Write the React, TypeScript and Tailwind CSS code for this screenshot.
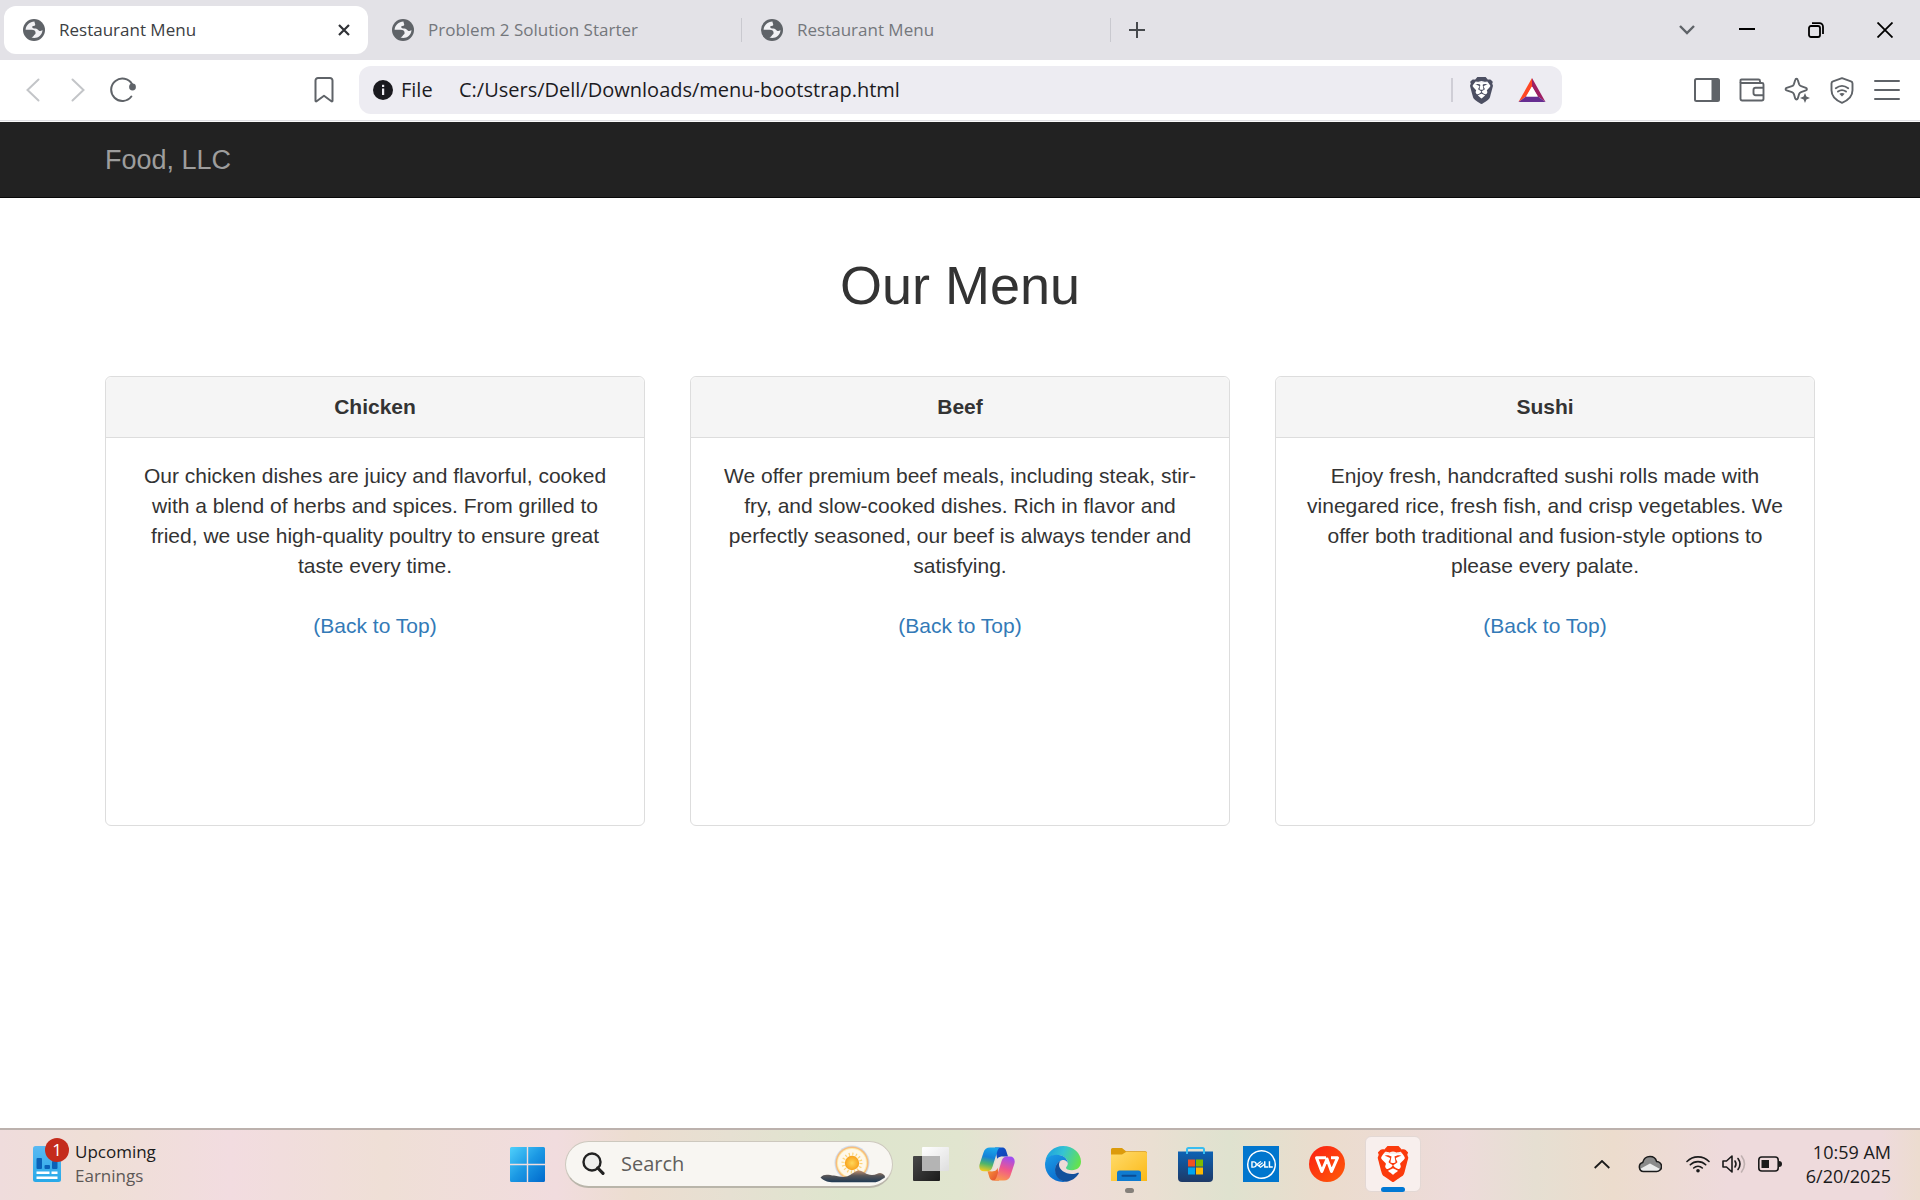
import type { ReactNode } from "react";
import { SiBrave, SiDell } from "react-icons/si";

const uiFont = "font-['Segoe_UI','Open_Sans',sans-serif]";

function Globe() {
  return (
    <svg width="22" height="22" viewBox="0 0 22 22" className="shrink-0">
      <circle cx="11" cy="11" r="11" fill="#5f6368" />
      <path
        d="M11.5 2.6C6.6 2.8 3 6.400 2.600 10.800H8.600c2.600 0 4 1.200 4 3.200 0 1.500-1.400 1.600-1.900 2.700-.4.900-1.400 1.300-2.300 1.900C14 20.300 19.500 16.500 19.400 11c-1.300 1.200-2.500 1.300-3.700.5-1-.8-1.600-2-3.300-2-1.700 0-3.200-.2-3.200-1.500 0-1.700 2.600-.6 3-2 .3-1-.7-1.400-.7-3.400Z"
        fill="#f1f1f4"
      />
    </svg>
  );
}

function Tab({ title, active = false }: { title: string; active?: boolean }) {
  return (
    <div
      className={
        active
          ? "flex h-12 w-[364px] items-center rounded-xl bg-white pr-3 pl-[19px]"
          : "flex h-12 w-[369px] items-center pl-[19px]"
      }
    >
      <Globe />
      <a href="#top" className="flex-1 truncate pl-[14px] text-[17px]">
        <span className={active ? "text-[#3c4043]" : "text-[#74777c]"}>{title}</span>
      </a>
      {active ? (
        <button aria-label="Close tab" className="grid size-6 place-items-center">
          <svg width="12" height="12" viewBox="0 0 12 12" stroke="#303236" strokeWidth="2.200">
            <path d="M1 1l10 10M11 1L1 11" />
          </svg>
        </button>
      ) : (
        <span className="h-6 w-px bg-[#c9c9cf]" />
      )}
    </div>
  );
}

function IconButton({ label, className, children }: { label: string; className: string; children: ReactNode }) {
  return (
    <button aria-label={label} className={`grid shrink-0 place-items-center ${className}`}>
      {children}
    </button>
  );
}

function TabStrip() {
  return (
    <header className="flex h-[60px] items-center bg-[#e3e2e7] pl-1">
      <Tab title="Restaurant Menu" active />
      <div className="w-[5px]" />
      <Tab title="Problem 2 Solution Starter" />
      <Tab title="Restaurant Menu" />
      <IconButton label="New tab" className="ml-[6px] size-10">
        <svg width="16" height="16" viewBox="0 0 16 16" stroke="#46494d" strokeWidth="2">
          <path d="M8 0v16M0 8h16" />
        </svg>
      </IconButton>
      <div className="flex-1" />
      <IconButton label="Search tabs" className="h-12 w-[50px]">
        <svg width="16" height="10" viewBox="0 0 16 10" fill="none" stroke="#5f6368" strokeWidth="2.400">
          <path d="M1 1l7 7 7-7" />
        </svg>
      </IconButton>
      <IconButton label="Minimize" className="h-12 w-[69px]">
        <svg width="16" height="16" viewBox="0 0 16 16" stroke="#000" strokeWidth="2">
          <path d="M0 7h16" />
        </svg>
      </IconButton>
      <IconButton label="Restore" className="h-12 w-[69px]">
        <svg width="16" height="16" viewBox="0 0 16 16" fill="none" stroke="#000" strokeWidth="1.800">
          <rect x="1" y="4" width="11" height="11" rx="2" />
          <path d="M4 1.200h7.500a3.500 3.500 0 0 1 3.500 3.500V12" />
        </svg>
      </IconButton>
      <IconButton label="Close window" className="mr-px h-12 w-[69px]">
        <svg width="16" height="16" viewBox="0 0 16 16" stroke="#000" strokeWidth="1.800">
          <path d="M.5.5l15 15M15.500.5l-15 15" />
        </svg>
      </IconButton>
    </header>
  );
}

function Toolbar() {
  return (
    <div className="flex h-[62px] items-start border-b border-[#fafafa] bg-white">
      <div className="flex h-[61px] w-full items-center border-b border-[#dfdfe3] pr-[11px] pl-[11px]">
        <IconButton label="Back" className="size-11">
          <svg width="14" height="24" viewBox="0 0 14 24" fill="none" stroke="#c3c5c8" strokeWidth="2" strokeLinecap="round">
            <path d="M12.500 1.500L1.500 12l11 10.500" />
          </svg>
        </IconButton>
        <IconButton label="Forward" className="ml-px size-11">
          <svg width="14" height="24" viewBox="0 0 14 24" fill="none" stroke="#c3c5c8" strokeWidth="2" strokeLinecap="round">
            <path d="M1.500 1.500L12.500 12l-11 10.500" />
          </svg>
        </IconButton>
        <IconButton label="Reload" className="ml-px size-11">
          <svg width="26" height="26" viewBox="0 0 26 26" fill="none">
            <path d="M21.300 19.500A11.200 11.200 0 1 1 22 7" stroke="#5f6368" strokeWidth="2" strokeLinecap="round" />
            <circle cx="22.500" cy="10" r="3.400" fill="#5f6368" />
          </svg>
        </IconButton>
        <IconButton label="Bookmark this page" className="ml-[157px] size-11">
          <svg width="20" height="26" viewBox="0 0 20 26" fill="none" stroke="#5f6368" strokeWidth="2" strokeLinejoin="round">
            <path d="M1.500 3.500a2.500 2.500 0 0 1 2.500-2.500h12a2.500 2.500 0 0 1 2.500 2.500v20.200c0 .7-.6.900-1.100.5L10 18.800l-7.400 5.400c-.5.400-1.100.2-1.100-.5Z" />
          </svg>
        </IconButton>
        <div className="ml-[13px] flex h-12 flex-1 items-center rounded-xl bg-[#edecf2] pr-4 pl-[14px]">
          <svg width="20" height="20" viewBox="0 0 20 20" className="shrink-0">
            <circle cx="10" cy="10" r="10" fill="#1a1a1f" />
            <rect x="9" y="8.500" width="2.200" height="6.500" fill="#edecf2" />
            <rect x="9" y="4.800" width="2.200" height="2.200" fill="#edecf2" />
          </svg>
          <label htmlFor="address" className="w-[66px] pl-2 text-[20px] text-[#1c1b1f]">
            File
          </label>
          <input
            id="address"
            className="min-w-0 flex-1 bg-transparent text-[20px] text-[#1c1b1f] outline-none"
            defaultValue="C:/Users/Dell/Downloads/menu-bootstrap.html"
          />
          <span className="mr-[14px] h-6 w-[2px] bg-[#cfced6]" />
          <IconButton label="Shields" className="h-10 w-7">
            <svg width="27" height="27" viewBox="0 0 28 28" className="col-start-1 row-start-1">
              <path d="M6 6h16l2 4-3 10-7 5-7-5L4 10Z" fill="#fff" />
            </svg>
            <SiBrave size={27} color="#4c4f62" className="col-start-1 row-start-1" />
          </IconButton>
          <IconButton label="Rewards" className="ml-[23px] h-10 w-7">
            <svg width="28" height="24" viewBox="0 0 28 24">
              <path d="M14 0v8.500L8 18.500.5 24Z" fill="#ff4724" />
              <path d="M14 0v8.500l6 10 7.500 5.500Z" fill="#9e1f63" />
              <path d="M.5 24L8 18.500h12l7.500 5.500Z" fill="#662d91" />
              <path d="M14 8.500l-5.700 10h11.400Z" fill="#fff" />
            </svg>
          </IconButton>
        </div>
        <div className="ml-[123px] flex items-center gap-[1px]">
          <IconButton label="Sidebar" className="size-11">
            <svg width="26" height="24" viewBox="0 0 26 24">
              <rect x="1" y="1" width="24" height="22" rx="1.500" fill="none" stroke="#5f6368" strokeWidth="2" />
              <path d="M17.500 1H25v22h-7.500Z" fill="#5f6368" />
            </svg>
          </IconButton>
          <IconButton label="Wallet" className="size-11">
            <svg width="26" height="24" viewBox="0 0 26 24" fill="none" stroke="#5f6368" strokeWidth="1.900" strokeLinejoin="round">
              <path d="M1.500 5V2.500Q1.500 1.500 2.500 1.500h17Q21 1.500 21 3v2" />
              <path d="M1.500 5H23q1.500 0 1.500 1.500v14.300q0 1.700-1.700 1.700H3.200q-1.700 0-1.700-1.700Z" />
              <path d="M24.500 9.800h-7.800q-2.200 0-2.200 2.200v3q0 2.200 2.200 2.200h7.800" />
            </svg>
          </IconButton>
          <IconButton label="Assistant" className="size-11">
            <svg width="26" height="26" viewBox="0 0 26 26">
              <path
                d="M12.500 1.800q1 0 1.300 1.100l1.300 4.300q.5 1.500 2 2l4.800 1.700q1 .4 1 1.300t-1 1.200l-4.800 1.700q-1.500.5-2 2l-1.300 4.300q-.4 1.100-1.300 1.100t-1.300-1.100l-1.300-4.300q-.5-1.500-2-2L2.600 13.400q-1-.3-1-1.200t1-1.300l5.300-1.700q1.500-.5 2-2l1.300-4.300q.3-1.100 1.300-1.100Z"
                fill="none"
                stroke="#5f6368"
                strokeWidth="1.900"
              />
              <path d="M21 16l1.400 3.600L26 21l-3.600 1.400L21 26l-1.400-3.600L16 21l3.600-1.400Z" fill="#5f6368" stroke="#fff" strokeWidth="1" paintOrder="stroke" />
            </svg>
          </IconButton>
          <IconButton label="VPN" className="size-11">
            <svg width="24" height="27" viewBox="0 0 24 27" fill="none" stroke="#5f6368" strokeWidth="1.900" strokeLinejoin="round">
              <path d="M12 1.200l9 3.200q1.500.5 1.500 2v6.900c0 5.500-3.700 9.800-10.500 12.500C5.200 23.100 1.500 18.800 1.500 13.300V6.400q0-1.500 1.500-2Z" />
              <path d="M5.800 11.200q6.200-4.600 12.400 0M8 14.600q4-3 8 0" strokeLinecap="round" />
              <path d="M9.300 16.800q2.700-1.600 5.400 0L12 19.500Z" fill="#5f6368" stroke="none" />
            </svg>
          </IconButton>
          <IconButton label="Menu" className="size-11">
            <svg width="26" height="22" viewBox="0 0 26 22" stroke="#5f6368" strokeWidth="2" strokeLinecap="round">
              <path d="M1 2h24M1 11h24M1 20h24" />
            </svg>
          </IconButton>
        </div>
      </div>
    </div>
  );
}

const dishes = [
  {
    name: "Chicken",
    text: "Our chicken dishes are juicy and flavorful, cooked with a blend of herbs and spices. From grilled to fried, we use high-quality poultry to ensure great taste every time.",
  },
  {
    name: "Beef",
    text: "We offer premium beef meals, including steak, stir-fry, and slow-cooked dishes. Rich in flavor and perfectly seasoned, our beef is always tender and satisfying.",
  },
  {
    name: "Sushi",
    text: "Enjoy fresh, handcrafted sushi rolls made with vinegared rice, fresh fish, and crisp vegetables. We offer both traditional and fusion-style options to please every palate.",
  },
];

function MenuPage() {
  return (
    <div id="top" className="flex-1 bg-white font-['Liberation_Sans',Arial,sans-serif] text-[21px] leading-[30px] text-[#333]">
      <nav className="border-b border-[#080808] bg-[#222]">
        <div className="mx-auto flex h-[75px] w-full max-w-[1710px] items-center">
          <a href="#top" className="text-[27px] text-[#9d9d9d]">
            Food, LLC
          </a>
        </div>
      </nav>
      <main className="mx-auto w-full max-w-[1710px]">
        <h1 className="mt-[57px] text-center text-[54px] leading-[60px]">Our Menu</h1>
        <div className="mt-[61px] grid grid-cols-3 gap-[45px]">
          {dishes.map((dish) => (
            <section key={dish.name} className="min-h-[450px] rounded-md border border-[#ddd] text-center">
              <h2 className="rounded-t-md border-b border-[#ddd] bg-[#f5f5f5] py-[15px] font-bold">{dish.name}</h2>
              <div className="px-6 py-[23px]">
                <p>{dish.text}</p>
                <a href="#top" className="mt-[30px] inline-block text-[#337ab7]">
                  (Back to Top)
                </a>
              </div>
            </section>
          ))}
        </div>
      </main>
    </div>
  );
}

function TaskbarApp({ label, state, children }: { label: string; state?: "open" | "active"; children: ReactNode }) {
  return (
    <button
      aria-label={label}
      className={
        state === "active"
          ? "relative grid size-14 place-items-center rounded-md border border-[#e3d8d4] bg-[#f8efed]"
          : "relative grid size-14 place-items-center"
      }
    >
      {children}
      {state === "open" && <span className="absolute -bottom-px h-[5px] w-[9px] rounded-full bg-[#85807a]" />}
      {state === "active" && <span className="absolute -bottom-px h-[5px] w-6 rounded-full bg-[#0078d4]" />}
    </button>
  );
}

function WindowsLogo() {
  return (
    <svg width="35" height="35" viewBox="0 0 35 35">
      <defs>
        <linearGradient id="win" x1="0" y1="0" x2="1" y2="1">
          <stop offset="0" stopColor="#4fd0fb" />
          <stop offset=".5" stopColor="#1b98e4" />
          <stop offset="1" stopColor="#0069cc" />
        </linearGradient>
      </defs>
      <path d="M1.500 0H16.800V16.800H0V1.500A1.500 1.500 0 0 1 1.500 0ZM18.200 0H33.500A1.500 1.500 0 0 1 35 1.500V16.800H18.200ZM0 18.200H16.800V35H1.500A1.500 1.500 0 0 1 0 33.500ZM18.200 18.200H35V33.500A1.500 1.500 0 0 1 33.500 35H18.200Z" fill="url(#win)" />
    </svg>
  );
}

function SunriseArt() {
  return (
    <svg width="66" height="40" viewBox="0 0 66 40" className="shrink-0">
      <defs>
        <radialGradient id="sun">
          <stop offset="0" stopColor="#ffd75a" />
          <stop offset="1" stopColor="#f8a21c" />
        </radialGradient>
        <linearGradient id="hill" x1="0" y1="0" x2="0" y2="1">
          <stop offset="0" stopColor="#c08e6c" />
          <stop offset=".45" stopColor="#565558" />
          <stop offset="1" stopColor="#1f3a55" />
        </linearGradient>
      </defs>
      <circle cx="32" cy="19" r="17.500" fill="#cfdcec" />
      <circle cx="32" cy="19" r="16.500" fill="#f8bd7c" />
      <circle cx="32" cy="19" r="15" fill="#fdeeb0" />
      <circle cx="32" cy="19" r="14" fill="#fff8ea" />
      <circle cx="32" cy="19" r="9" fill="none" stroke="#fcd579" strokeWidth="3" strokeDasharray="1.200 2.334" />
      <circle cx="32" cy="19" r="7.200" fill="url(#sun)" />
      <path d="M.5 33.500C4 29 9 31 14 31.500c6 .8 10 2.700 15 0 4-2.200 7-5 10-5 4 .2 7 4.500 13 4.500 5 0 7-3.500 10-1.500 3 1.500 3.500 3 2.500 4.500C61 35.500 59 38.300 54 38.300H14C8 38.300 4 37 .5 33.500Z" fill="url(#hill)" />
    </svg>
  );
}

function Copilot() {
  return (
    <svg width="36" height="34" viewBox="0 0 36 34">
      <defs>
        <linearGradient id="cpA" x1=".5" y1="0" x2=".3" y2="1">
          <stop offset="0" stopColor="#1ba6ea" />
          <stop offset=".4" stopColor="#1481d8" />
          <stop offset=".7" stopColor="#4fb56b" />
          <stop offset="1" stopColor="#f0cb1e" />
        </linearGradient>
        <linearGradient id="cpB" x1=".6" y1="0" x2=".3" y2="1">
          <stop offset="0" stopColor="#a04df0" />
          <stop offset=".5" stopColor="#f0578c" />
          <stop offset="1" stopColor="#fb9a4b" />
        </linearGradient>
        <linearGradient id="cpC" x1="0" y1="0" x2="1" y2="1">
          <stop offset="0" stopColor="#0b57d0" />
          <stop offset="1" stopColor="#173fae" />
        </linearGradient>
        <linearGradient id="cpD" x1="0" y1="0" x2="1" y2="1">
          <stop offset="0" stopColor="#f9a03c" />
          <stop offset="1" stopColor="#e2452e" />
        </linearGradient>
      </defs>
      <path d="M16 .5h7c3 0 3.800 1.800 4.500 4.200L29 9.500h-5c-3 0-4.600 1.500-5.500 4Z" fill="url(#cpC)" />
      <path d="M20 33.500h-5c-3.500 0-4.300-2-5-4.500L8.500 24.300H14c2.500 0 3.800-1.600 4.600-4Z" fill="url(#cpD)" />
      <path d="M11 .5H22c-2 0-3 1.600-3.600 3.500l-5 16c-1 3-2.400 4.300-5.400 4.300H5c-4 0-5.500-3.300-4.300-7.300L4.500 5.500C5.500 2.300 7.700.5 11 .5Z" fill="url(#cpA)" />
      <path d="M25 33.500H14c2 0 3-1.600 3.600-3.500l5-16c1-3 2.400-4.500 5.400-4.500h3c4 0 5.500 3.500 4.300 7.500l-3.800 11.500c-1 3.200-3.200 5-6.500 5Z" fill="url(#cpB)" />
      <path d="M24 9.500c-4 0-6 1.300-7 4.500l-2 6.300c-.7 2.200-1.700 3.500-3.500 4 4.500 0 6.700-1.300 7.700-4.500l2-6.300c.7-2.200 1.300-3.500 2.800-4Z" fill="#f0e0dc" />
    </svg>
  );
}

function Edge() {
  return (
    <svg width="36" height="36" viewBox="0 0 36 36">
      <defs>
        <linearGradient id="edA" x1="0" y1=".3" x2="1" y2=".6">
          <stop offset="0" stopColor="#1c9fe0" />
          <stop offset=".45" stopColor="#35c3d3" />
          <stop offset="1" stopColor="#66e34a" />
        </linearGradient>
        <linearGradient id="edB" x1="0" y1="0" x2=".5" y2="1">
          <stop offset="0" stopColor="#1d9de6" />
          <stop offset="1" stopColor="#0a6cce" />
        </linearGradient>
      </defs>
      <path d="M.3 15.500C1.500 6.500 9 0 18 0c10.500 0 18 7.500 18 15.500 0 5.500-4 8.700-9 8.700-4 0-6-1.300-6-2.500 0-.9 1.800-1.700 1.800-4.500 0-4.500-4-8.200-10.300-8.200C6 9 1.500 12.500.3 15.500Z" fill="url(#edA)" />
      <path d="M0 18.500C0 12 5 8.700 11.500 8.700c7 0 11 4 11.300 8.300-1.200-2.500-3.200-3.500-5.300-3-4 .8-7.500 5-7 10.500.4 5.500 4.800 10.500 10.500 11.200C9 37.500 0 28.500 0 18.500Z" fill="url(#edB)" />
      <path d="M16 14.500c-3.500 1.500-6.300 5.500-5.900 10.500.5 6 5.400 10.300 10.900 10.700 5.500-.6 9.800-3.700 12.700-8 .5-.8-.2-1.300-1-.9-1.500.8-3.500 1.300-5.700 1.300-7 0-13-4.600-13-9.300 0-1.800.8-3.300 2-4.300Z" fill="#114f9c" />
    </svg>
  );
}

function Taskbar() {
  return (
    <footer
      className={`grid h-[72px] grid-cols-[1fr_auto_1fr] items-center border-t-2 border-[#bcb1ad] bg-[linear-gradient(90deg,#efdcdc_0%,#efdfd6_5%,#f2dce0_12%,#efdfd6_20%,#f1dcde_29%,#ecddd0_33%,#e6e0d2_38%,#dee5cd_44%,#e1e5cf_50%,#efdbd9_55%,#eadfd2_60%,#dfe2cf_64%,#ebdccd_69%,#eddbda_76%,#e6dfd2_80%,#ecdccd_84%,#eedadc_90%,#eedadc_98%,#ecdccf_100%)] pb-[2px] ${uiFont}`}
    >
      <button className="flex items-center pl-[33px] text-left">
        <span className="relative mr-[14px] block">
          <svg width="28" height="36" viewBox="0 0 28 36">
            <defs>
              <linearGradient id="news" x1="0" y1="0" x2="0" y2="1">
                <stop offset="0" stopColor="#5ab9f2" />
                <stop offset="1" stopColor="#27a9e8" />
              </linearGradient>
            </defs>
            <rect width="28" height="36" rx="2.500" fill="url(#news)" />
            <rect x="3.500" y="12" width="5.500" height="11" rx="1" fill="#0b62b8" />
            <rect x="11.500" y="19" width="5.500" height="4" rx="1" fill="#0b62b8" />
            <rect x="19" y="15" width="5.500" height="8" rx="1" fill="#0b62b8" />
            <path d="M3.500 26.800H16.500M18.500 26.800H24.500M3.500 31.800H24.500" stroke="#fff" strokeWidth="2.400" />
          </svg>
          <span className="absolute -top-2 left-3 grid size-6 place-items-center rounded-full bg-[#c42b1c] text-[17px] leading-6 text-white">1</span>
        </span>
        <span className="text-[17px] leading-6">
          <span className="block text-[#1b1b1b]">Upcoming</span>
          <span className="block text-[#5d5856]">Earnings</span>
        </span>
      </button>

      <div className="flex items-center gap-[10px]">
        <TaskbarApp label="Start">
          <WindowsLogo />
        </TaskbarApp>
        <label className="flex h-[47px] w-[328px] items-center rounded-full border border-b-2 border-[#cdc8be] border-b-[#b9b5aa] bg-[#f8f6f2] pr-[6px] pl-4">
          <svg width="23" height="23" viewBox="0 0 23 23" fill="none" stroke="#222" strokeWidth="2.400" className="shrink-0">
            <circle cx="10" cy="10" r="8.500" fill="#eeeeec" />
            <path d="M15.800 16L21 21.300" strokeWidth="3.200" strokeLinecap="round" />
          </svg>
          <input aria-label="Search" placeholder="Search" className="ml-4 min-w-0 flex-1 bg-transparent text-[20px] outline-none placeholder:text-[#605e5c]" />
          <SunriseArt />
        </label>
        <TaskbarApp label="Task view">
          <svg width="36" height="34" viewBox="0 0 36 34">
            <defs>
              <linearGradient id="tvDark" x1="0" y1="0" x2="1" y2="1">
                <stop offset="0" stopColor="#484848" />
                <stop offset="1" stopColor="#1b1b1b" />
              </linearGradient>
              <linearGradient id="tvLight" x1="0" y1="0" x2="1" y2="1">
                <stop offset="0" stopColor="#fff" />
                <stop offset="1" stopColor="#dedede" />
              </linearGradient>
            </defs>
            <rect y="9" width="27" height="25" rx="1" fill="url(#tvDark)" />
            <rect x="9" width="27" height="24" rx="1" fill="url(#tvLight)" />
            <path d="M9 9h18v15H9Z" fill="#b4b4b4" />
          </svg>
        </TaskbarApp>
        <TaskbarApp label="Copilot">
          <Copilot />
        </TaskbarApp>
        <TaskbarApp label="Edge">
          <Edge />
        </TaskbarApp>
        <TaskbarApp label="File Explorer" state="open">
          <svg width="36" height="33" viewBox="0 0 36 33">
            <defs>
              <linearGradient id="folder" x1="0" y1="0" x2="1" y2="1">
                <stop offset="0" stopColor="#ffdb6b" />
                <stop offset="1" stopColor="#fbb917" />
              </linearGradient>
            </defs>
            <path d="M0 1.500Q0 0 1.500 0H11l4 3.300H34.500Q36 3.300 36 5v6H0Z" fill="#dc9b0b" />
            <path d="M0 6.500H11L15 4H34.500Q36 4 36 5.500V33H0Z" fill="url(#folder)" />
            <path d="M6 33V25q0-2.500 2.500-2.500h19Q30 22.500 30 25v8Z" fill="#0f7bd0" />
            <rect x="10.500" y="26.800" width="15" height="2" rx="1" fill="#0b4c93" />
          </svg>
        </TaskbarApp>
        <TaskbarApp label="Microsoft Store">
          <svg width="35" height="35" viewBox="0 0 35 35">
            <defs>
              <linearGradient id="store" x1="0" y1="0" x2="0" y2="1">
                <stop offset="0" stopColor="#0c62b4" />
                <stop offset="1" stopColor="#1e3a67" />
              </linearGradient>
            </defs>
            <path d="M0 4.500H35V31q0 4-4 4H4q-4 0-4-4Z" fill="url(#store)" />
            <path d="M9 7V2.500Q9 1 10.500 1h14Q26 1 26 2.500V7" fill="none" stroke="#38bdf0" strokeWidth="2" />
            <path d="M10 12.500h7v7h-7Z" fill="#f25022" />
            <path d="M18 12.500h7v7h-7Z" fill="#7fba00" />
            <path d="M10 20.500h7v7h-7Z" fill="#00a4ef" />
            <path d="M18 20.500h7v7h-7Z" fill="#ffb900" />
          </svg>
        </TaskbarApp>
        <TaskbarApp label="Dell">
          <span className="grid size-9 place-items-center bg-[#0076ce]">
            <SiDell size={29} color="#fff" />
          </span>
        </TaskbarApp>
        <TaskbarApp label="WPS Office">
          <svg width="36" height="36" viewBox="0 0 36 36">
            <defs>
              <linearGradient id="wps" x1="0" y1="0" x2="1" y2="1">
                <stop offset="0" stopColor="#fb1f14" />
                <stop offset="1" stopColor="#ff5c08" />
              </linearGradient>
            </defs>
            <circle cx="18" cy="18" r="18" fill="url(#wps)" />
            <path d="M17 11.800H7.500l5.300 13.700L18 13l4.500 12.500L28.500 11.800H22" fill="none" stroke="#fff" strokeWidth="3" strokeLinejoin="round" />
          </svg>
        </TaskbarApp>
        <TaskbarApp label="Brave" state="active">
          <svg width="36" height="36" viewBox="0 0 36 36" className="col-start-1 row-start-1">
            <path d="M8 8h20l3 5-4 14-9 6-9-6L5 13Z" fill="#fff" />
          </svg>
          <SiBrave size={36} color="#fb3a0c" className="col-start-1 row-start-1" />
        </TaskbarApp>
      </div>

      <div className="flex items-center justify-end pr-[29px]">
        <IconButton label="Show hidden icons" className="mr-[28px] h-12 w-4">
          <svg width="16" height="9" viewBox="0 0 16 9" fill="none" stroke="#1b1b1b" strokeWidth="1.800">
            <path d="M.7 8L8 1l7.300 7" />
          </svg>
        </IconButton>
        <IconButton label="OneDrive" className="mr-6 h-12 w-6">
          <svg width="24" height="18" viewBox="0 0 24 18">
            <path d="M5.500 16.500a4.600 4.600 0 0 1-.8-9C5.700 3.500 8.500 1.500 12 1.500c3.500 0 5.800 2 6.600 5a5 5 0 0 1-.1 10Z" fill="#8b8b8b" />
            <path d="M2 14L12 8.500l10 5.500q-1.500 2.500-4 2.500H6q-3 0-4-2.500Z" fill="#ececec" />
            <path d="M5.500 16.500a4.600 4.600 0 0 1-.8-9C5.700 3.500 8.500 1.500 12 1.500c3.500 0 5.800 2 6.600 5a5 5 0 0 1-.1 10Z" fill="none" stroke="#1b1b1b" strokeWidth="1.500" />
          </svg>
        </IconButton>
        <button aria-label="Network, volume and battery" className="flex h-12 items-center gap-3">
          <svg width="24" height="18" viewBox="0 0 24 18" fill="none" stroke="#1b1b1b" strokeWidth="1.600" strokeLinecap="round">
            <path d="M1 6.500a15.500 15.500 0 0 1 22 0M4.300 9.800a10.900 10.900 0 0 1 15.400 0M7.700 13a6.200 6.200 0 0 1 8.600 0" />
            <circle cx="12" cy="15.800" r="1.800" fill="#1b1b1b" stroke="none" />
          </svg>
          <svg width="24" height="20" viewBox="0 0 24 20" fill="none" stroke="#1b1b1b" strokeWidth="1.600" strokeLinecap="round" strokeLinejoin="round">
            <path d="M1 7v6h3.500l5.500 5V2L4.500 7Z" />
            <path d="M13 7q2 3 0 6M16 4.500q4 5.500 0 11" />
            <path d="M19.500 2q6 8 0 16" stroke="#bfb0b0" />
          </svg>
          <svg width="24" height="16" viewBox="0 0 24 16">
            <rect x=".8" y="1" width="19.400" height="14" rx="3" fill="none" stroke="#1b1b1b" strokeWidth="1.600" />
            <path d="M3.500 4h7.500v8H3.500Z" fill="#1b1b1b" />
            <path d="M21 5q3 0 3 3t-3 3Z" fill="#1b1b1b" />
          </svg>
        </button>
        <button className="ml-6 text-right text-[18px] leading-6 text-[#1b1b1b]">
          <span className="block">10:59 AM</span>
          <span className="block">6/20/2025</span>
        </button>
      </div>
    </footer>
  );
}

export default function App() {
  return (
    <div className={`flex min-h-screen flex-col bg-white ${uiFont}`}>
      <TabStrip />
      <Toolbar />
      <MenuPage />
      <Taskbar />
    </div>
  );
}
